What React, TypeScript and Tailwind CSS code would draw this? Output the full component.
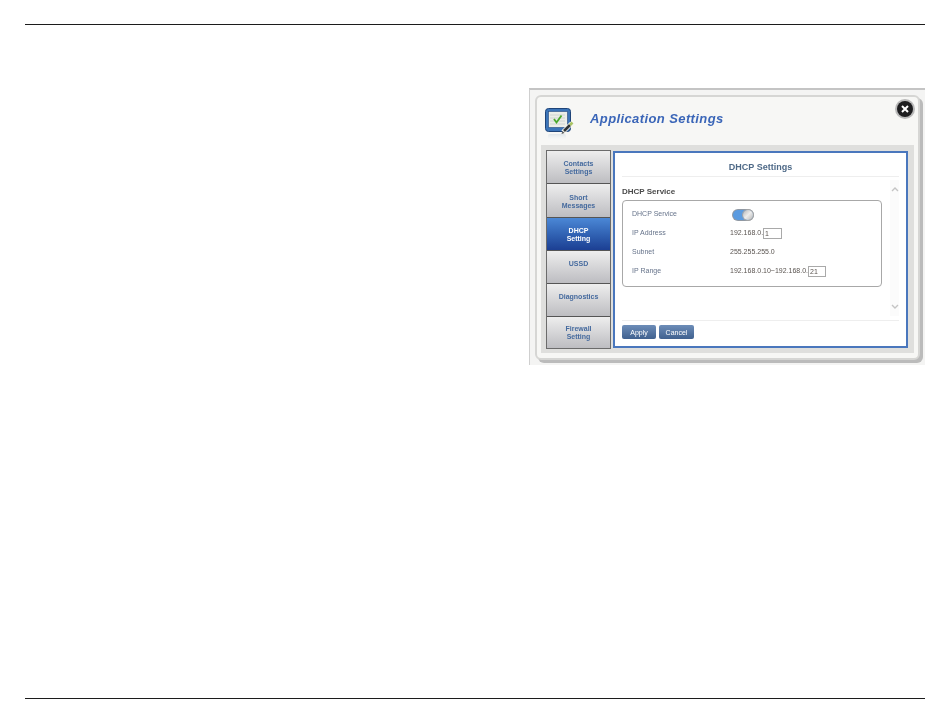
import React from "react";

const tabs = [
  { label: "Contacts Settings", lines: ["Contacts", "Settings"], box: "h-[33px] pt-[2px]" },
  { label: "Short Messages", lines: ["Short", "Messages"], box: "h-[34px] pt-[2px]" },
  { label: "DHCP Setting", lines: ["DHCP", "Setting"], box: "h-[33px] pt-[2px]", active: true },
  { label: "USSD", lines: ["USSD"], box: "h-[33px] pb-[6px]" },
  { label: "Diagnostics", lines: ["Diagnostics"], box: "h-[33px] pb-[6px]" },
  { label: "Firewall Setting", lines: ["Firewall", "Setting"], box: "h-[31px]" },
];

const AppIcon = () => (
  <svg width="30" height="36" viewBox="0 0 30 36" className="mt-[6px] block">
    <defs>
      <linearGradient id="shine" x1="0" y1="0" x2="0" y2="1">
        <stop offset="0" stopColor="#dfe6ea" />
        <stop offset="1" stopColor="#ffffff" stopOpacity="0" />
      </linearGradient>
    </defs>
    <rect x="0.5" y="0.5" width="25" height="23" rx="3" fill="#3b74b8" stroke="#1f4478" />
    <rect x="3.5" y="3.5" width="19" height="16" fill="#eceee8" stroke="#24497f" strokeWidth="0.6" />
    <path d="M5 7h15M5 10h15M5 13h15M5 16h15" stroke="#c9cdcc" strokeWidth="0.8" />
    <path d="M9 11l2.5 3.5 5-7" fill="none" stroke="#4aa92c" strokeWidth="1.8" />
    <path d="M18 24l9-9" stroke="#f4f4ee" strokeWidth="4.4" />
    <path d="M19 23l6-6" stroke="#2e3335" strokeWidth="2.6" />
    <path d="M25 17l2.5-2.5" stroke="#a9c463" strokeWidth="2.6" />
    <path d="M16.5 26l1-3 2 2z" fill="#55595a" />
    <rect x="3" y="26" width="18" height="8" rx="2" fill="url(#shine)" />
  </svg>
);

const Chevron = ({ up }: { up?: boolean }) => (
  <svg width="8" height="6" viewBox="0 0 8 6" className="block">
    <path d={up ? "M1 5l3-3 3 3" : "M1 1l3 3 3-3"} fill="none" stroke="#c4c4c4" strokeWidth="1.4" />
  </svg>
);

const Row = ({ label, children }: { label: string; children: React.ReactNode }) => (
  <div className="flex h-[19px] items-center">
    <div className="w-[98px] text-[#66738a]">{label}</div>
    <div className="flex items-center text-[#5a5450]">{children}</div>
  </div>
);

const SmallInput = ({ value, width }: { value: string; width: string }) => (
  <span className={`flex h-[11px] items-center border border-[#a9a9a9] pl-px leading-none ${width}`}>{value}</span>
);

const App = () => {
  return (
    <div className="flex h-[725px] w-[950px] flex-col bg-white px-[25px] pt-[24px] pb-[26px] font-['Liberation_Sans',Arial,sans-serif]">
      <div className="h-px bg-[#1c1c1c]" />

      <div className="mt-[63px] flex justify-end">
        <div className="h-[277px] w-[396px] border-t-2 border-l border-t-[#c4c4c4] border-l-[#cfcfcf] bg-[#f4f4f3] pt-[5px] pr-[5px] pb-[5px] pl-[5px] blur-[0.3px]">
          <div className="flex h-[265px] flex-col rounded-[6px] border-2 border-[#d6d6d4] bg-[#f7f7f5] shadow-[3px_3px_0_#bbbbbb]">
            <div className="relative flex h-[48px] shrink-0 items-center pt-[3px] pl-[8px]">
              <AppIcon />
              <h1 className="mt-[-7px] ml-[15px] text-[13px] font-bold tracking-[0.4px] text-[#3b66b8] italic">Application Settings</h1>
              <button className="absolute top-[4px] right-[5px] flex size-[16px] items-center justify-center rounded-full bg-[#1d1d1f] ring-2 ring-[#b9b9b9]">
                <svg width="8" height="8" viewBox="0 0 8 8">
                  <path d="M1 1l6 6M7 1l-6 6" stroke="#fff" strokeWidth="2" />
                </svg>
              </button>
            </div>

            <div className="mx-[4px] mb-[5px] flex min-h-0 flex-1 bg-[#dfdfdd] p-[5px] pr-[6px] pb-[4px]">
              <div className="flex w-[65px] shrink-0 flex-col border border-[#6b6b6b]">
                {tabs.map((tab) => (
                  <div
                    key={tab.label}
                    className={
                      tab.active
                        ? `flex ${tab.box} flex-col items-center justify-center border-b border-[#555] bg-gradient-to-b from-[#4b88d6] to-[#1c3f93] text-center text-[7px] leading-[8px] font-bold text-white`
                        : `flex ${tab.box} flex-col items-center justify-center border-b border-[#555] bg-gradient-to-b from-[#eeeeee] to-[#bdbdc1] text-center text-[7px] leading-[8px] font-bold text-[#456a9e] last:border-b-0`
                    }
                  >
                    {tab.lines.map((line) => (
                      <span key={line}>{line}</span>
                    ))}
                  </div>
                ))}
              </div>

              <div className="my-px ml-[2px] flex min-w-0 flex-1 flex-col border-2 border-[#4a77bd] bg-white pr-[7px] pl-[7px] text-[7px]">
                <h2 className="mt-[8px] border-b border-[#eeeeee] pb-[3px] text-center text-[9px] leading-[12px] font-bold text-[#4f6a88]">
                  DHCP Settings
                </h2>
                <div className="flex min-h-0 flex-1">
                  <div className="min-w-0 flex-1">
                    <h3 className="mt-[10px] text-[8px] leading-[10px] font-bold text-[#4a4a4a]">DHCP Service</h3>
                    <div className="mt-[3px] h-[87px] w-[260px] rounded-[4px] border border-[#a8a8a8] px-[9px] pt-[4px]">
                      <Row label="DHCP Service">
                        <span className="relative ml-[3px] block h-[10px] w-[20px] rounded-full bg-[#5b9be0] ring-1 ring-[#8f98a3]">
                          <span className="absolute top-0 right-0 size-[10px] rounded-full bg-gradient-to-br from-[#b5b5b5] via-[#ececec] to-[#b5b5b5] ring-1 ring-[#a5a5a5]" />
                        </span>
                      </Row>
                      <Row label="IP Address">
                        192.168.0.
                        <SmallInput value="1" width="w-[19px]" />
                      </Row>
                      <Row label="Subnet">255.255.255.0</Row>
                      <Row label="IP Range">
                        192.168.0.10~192.168.0.
                        <SmallInput value="21" width="w-[18px]" />
                      </Row>
                    </div>
                  </div>
                  <div className="mt-[3px] mb-[4px] flex w-[9px] shrink-0 flex-col items-center justify-between bg-[#fbfbfb] py-[6px]">
                    <Chevron up />
                    <Chevron />
                  </div>
                </div>
                <div className="flex h-[26px] shrink-0 items-start gap-[3px] border-t border-[#eeeeee] pt-[4px]">
                  <button className="h-[14px] w-[34px] rounded-[2px] bg-gradient-to-b from-[#6d8db8] to-[#40618f] text-[7px] leading-none text-white">
                    Apply
                  </button>
                  <button className="h-[14px] w-[35px] rounded-[2px] bg-gradient-to-b from-[#6d8db8] to-[#40618f] text-[7px] leading-none text-white">
                    Cancel
                  </button>
                </div>
              </div>
            </div>
          </div>
        </div>
      </div>

      <div className="mt-auto h-px bg-[#1c1c1c]" />
    </div>
  );
};

export default App;
